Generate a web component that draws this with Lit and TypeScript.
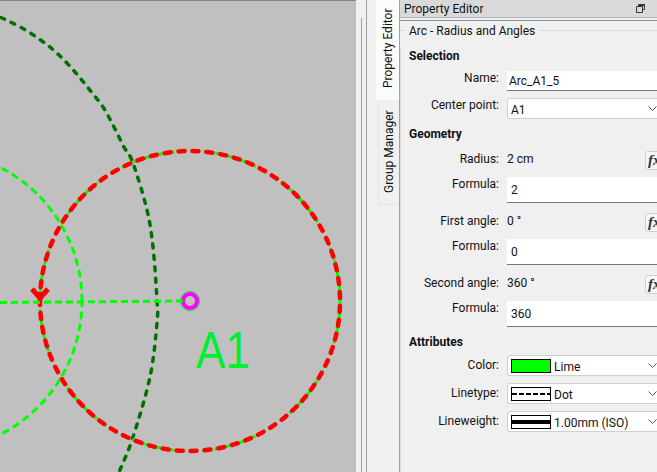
import { LitElement, html, css, svg } from 'lit';
import { customElement } from 'lit/decorators.js';

const darkPoints: [number, number][] = [
	[-20, 8], [2, 18], [22, 28], [42, 41], [59, 55], [75, 72], [89, 89], [103, 107], [114, 127], [124, 147],
	[133, 163], [147, 210], [153, 247], [157, 300], [157, 323], [150, 377], [133, 437], [120, 470], [112, 490],
];

// catmull-rom through the measured points of the dark arc
function smoothPath(pts: [number, number][]) {
	let d = `M${pts[0][0]},${pts[0][1]}`;
	for (let i = 0; i < pts.length - 1; i++) {
		const p0 = pts[Math.max(i - 1, 0)];
		const p1 = pts[i];
		const p2 = pts[i + 1];
		const p3 = pts[Math.min(i + 2, pts.length - 1)];
		const c1x = p1[0] + (p2[0] - p0[0]) / 6;
		const c1y = p1[1] + (p2[1] - p0[1]) / 6;
		const c2x = p2[0] - (p3[0] - p1[0]) / 6;
		const c2y = p2[1] - (p3[1] - p1[1]) / 6;
		d += ` C${c1x.toFixed(1)},${c1y.toFixed(1)} ${c2x.toFixed(1)},${c2y.toFixed(1)} ${p2[0]},${p2[1]}`;
	}
	return d;
}

@customElement('app-root')
export class AppRoot extends LitElement {
	static styles = css`
		:host {
			display: flex;
			width: 657px;
			height: 472px;
			overflow: hidden;
			background: #f0f0f0;
			font-family: Roboto, 'Noto Sans', sans-serif;
			font-size: 12px;
			color: #111;
		}
		.canvas {
			width: 356px;
			height: 472px;
			flex: none;
			background: #c0c0c0;
			border-top: 1px solid #808890;
			box-sizing: border-box;
		}
		.canvas svg {
			display: block;
			margin-top: -1px;
		}
		.strip {
			width: 6px;
			flex: none;
			box-sizing: border-box;
			margin-top: 18px;
			border-right: 1px solid #a0a0a0;
		}
		.gutter {
			width: 5px;
			flex: none;
			box-sizing: border-box;
			border-right: 1px solid #a0a0a0;
		}
		.tabs {
			width: 32px;
			flex: none;
			display: flex;
			flex-direction: column;
			align-items: flex-end;
			box-sizing: border-box;
		}
		.tab {
			writing-mode: vertical-rl;
			transform: rotate(180deg);
			box-sizing: border-box;
			display: flex;
			align-items: center;
			justify-content: center;
			line-height: 1;
		}
		.tab.active {
			width: 23px;
			height: 100px;
			padding-top: 4px;
			background: #fbfbfb;
		}
		.tab.other {
			width: 21px;
			height: 104px;
			margin-top: 1px;
			padding-top: 2px;
			border-top: 1px solid #e4e4e4;
			border-right: 1px solid #e4e4e4;
		}
		.panel {
			flex: 1;
			min-width: 0;
			border-left: 1px solid #a0a0a0;
			overflow: hidden;
		}
		.title {
			height: 17px;
			background: #d9d9d9;
			border-bottom: 1px solid #b4b4b4;
			display: flex;
			align-items: center;
			justify-content: space-between;
			padding-left: 4px;
			padding-right: 12px;
			line-height: 1;
		}
		.title svg {
			display: block;
		}
		.frame {
			margin-top: 2px;
			border-top: 1px solid #8a90a0;
			height: 451px;
			box-sizing: border-box;
			width: 268px;
		}
		.legend {
			display: flex;
			align-items: center;
			height: 19px;
			gap: 4px;
		}
		.legend i {
			height: 1px;
			background: #dcdcdc;
		}
		.legend i:first-child {
			width: 5px;
		}
		.legend i:last-child {
			flex: 1;
		}
		.body {
			border-left: 1px solid #dcdcdc;
			height: 431px;
			padding-left: 8px;
		}
		.head {
			font-weight: 700;
			height: 20px;
			line-height: 18px;
		}
		.row {
			display: grid;
			grid-template-columns: 90px 1fr;
			column-gap: 8px;
			margin-bottom: 8px;
		}
		.label {
			text-align: right;
			line-height: 14px;
		}
		.mid {
			align-items: center;
		}
		.mid .label {
			line-height: 16px;
			padding-bottom: 2px;
		}
		.input {
			background: #fff;
			border-bottom: 1px solid #777;
			box-sizing: border-box;
			padding-left: 2px;
			height: 20px;
			line-height: 20px;
		}
		.input.tall {
			height: 26px;
			line-height: 26px;
			padding-left: 4px;
		}
		.combo {
			background: #fff;
			border: 1px solid #d0d0d0;
			border-radius: 2px;
			box-sizing: border-box;
			height: 21px;
			display: flex;
			align-items: center;
			gap: 3px;
			padding-left: 3px;
		}
		.combo .text {
			padding-top: 2px;
		}
		.combo svg.chev {
			margin-left: auto;
			margin-right: 10px;
			flex: none;
		}
		.info {
			display: flex;
			align-items: center;
			justify-content: space-between;
			height: 20px;
		}
		.info .value {
			padding-bottom: 2px;
		}
		.fx {
			width: 23px;
			height: 19px;
			flex: none;
			box-sizing: border-box;
			background: #f7f7f7;
			border: 1px solid #cfcfcf;
			border-radius: 3px;
			font-family: 'Liberation Serif', serif;
			font-style: italic;
			font-weight: 700;
			font-size: 15px;
			line-height: 16px;
			padding-left: 2px;
			color: #333;
		}
		.swatch {
			width: 40px;
			height: 14px;
			flex: none;
			box-sizing: border-box;
			border: 1px solid #000;
			background: #fff;
			display: flex;
			align-items: center;
		}
		.swatch.lime {
			background: #00ff00;
		}
		.swatch .dash {
			flex: 1;
			height: 2px;
			background: repeating-linear-gradient(90deg, #000 0 5px, transparent 5px 7px);
		}
		.swatch .weight {
			flex: 1;
			height: 4px;
			background: #000;
		}
	`;

	drawing() {
		return svg`
			<path d=${smoothPath(darkPoints)} fill="none" stroke="#007000" stroke-width="3.5" stroke-linecap="round" stroke-dasharray="4 7.4"/>
			<circle cx="-68" cy="301" r="150" fill="none" stroke="#00ff00" stroke-width="3" stroke-linecap="round" stroke-dasharray="5 7"/>
			<circle cx="190" cy="301" r="150" fill="none" stroke="#00ff00" stroke-width="3" stroke-dasharray="7 5"/>
			<circle cx="190" cy="301" r="150" fill="none" stroke="#ff0000" stroke-width="4.5" stroke-linecap="round"
				stroke-dasharray="6 8" transform="rotate(180 190 301)"/>
			<circle cx="190" cy="301" r="9.5" fill="none" stroke="#00e040" stroke-width="1"/>
			<circle cx="190" cy="301" r="7" fill="none" stroke="#ff00ff" stroke-width="4"/>
			<path d="M0,302.5 L187,301" fill="none" stroke="#00ff00" stroke-width="3" stroke-dasharray="7 4"/>
			<path d="M32,289 L40,298 L48,289 M40,292 V300" fill="none" stroke="#ff0000" stroke-width="5"/>
			<text x="196" y="368" font-family="'Liberation Sans', sans-serif" font-size="52" fill="#00f030" textLength="54" lengthAdjust="spacingAndGlyphs">A1</text>
		`;
	}

	chevron() {
		return html`<svg class="chev" width="9" height="6" viewBox="0 0 9 6">
			<path d="M0.5,0.5 L4.5,4.5 L8.5,0.5" fill="none" stroke="#555" stroke-width="1"/>
		</svg>`;
	}

	infoRow(label: string, value: string, formula: string) {
		return html`
			<div class="row mid" style="margin-bottom:7px">
				<div class="label">${label}</div>
				<div class="info"><span class="value">${value}</span><span class="fx">fx</span></div>
			</div>
			<div class="row" style="margin-bottom:9px">
				<div class="label">Formula:</div>
				<div class="input tall">${formula}</div>
			</div>
		`;
	}

	render() {
		return html`
			<div class="canvas">
				<svg width="356" height="472" viewBox="0 0 356 472">${this.drawing()}</svg>
			</div>
			<div class="strip"></div>
			<div class="gutter"></div>
			<div class="tabs">
				<div class="tab active">Property Editor</div>
				<div class="tab other">Group Manager</div>
			</div>
			<div class="panel">
				<div class="title">
					<span>Property Editor</span>
					<svg width="9" height="9" viewBox="0 0 9 9">
						<path d="M2.5,2.5 V0.5 H8.5 V5.5 H6.5 M0.5,2.5 H6.5 V8.5 H0.5 Z M2.5,1.5 H8" fill="none" stroke="#333" stroke-width="1"/>
					</svg>
				</div>
				<div class="frame">
					<div class="legend"><i></i><span>Arc - Radius and Angles</span><i></i></div>
					<div class="body">
						<div class="head" style="margin-top:7px;margin-bottom:4px">Selection</div>
						<div class="row" style="margin-bottom:7px"><div class="label">Name:</div><div class="input">Arc_A1_5</div></div>
						<div class="row" style="margin-bottom:6px">
							<div class="label">Center point:</div>
							<div class="combo"><span class="text">A1</span>${this.chevron()}</div>
						</div>
						<div class="head" style="margin-bottom:5px">Geometry</div>
						${this.infoRow('Radius:', '2 cm', '2')}
						${this.infoRow('First angle:', '0 °', '0')}
						${this.infoRow('Second angle:', '360 °', '360')}
						<div class="head" style="margin-top:-3px;margin-bottom:2px">Attributes</div>
						<div class="row mid" style="margin-bottom:7px">
							<div class="label">Color:</div>
							<div class="combo"><span class="swatch lime"></span><span class="text">Lime</span>${this.chevron()}</div>
						</div>
						<div class="row mid" style="margin-bottom:7px">
							<div class="label">Linetype:</div>
							<div class="combo"><span class="swatch"><span class="dash"></span></span><span class="text">Dot</span>${this.chevron()}</div>
						</div>
						<div class="row mid">
							<div class="label">Lineweight:</div>
							<div class="combo"><span class="swatch"><span class="weight"></span></span><span class="text">1.00mm (ISO)</span>${this.chevron()}</div>
						</div>
					</div>
				</div>
			</div>
		`;
	}
}
